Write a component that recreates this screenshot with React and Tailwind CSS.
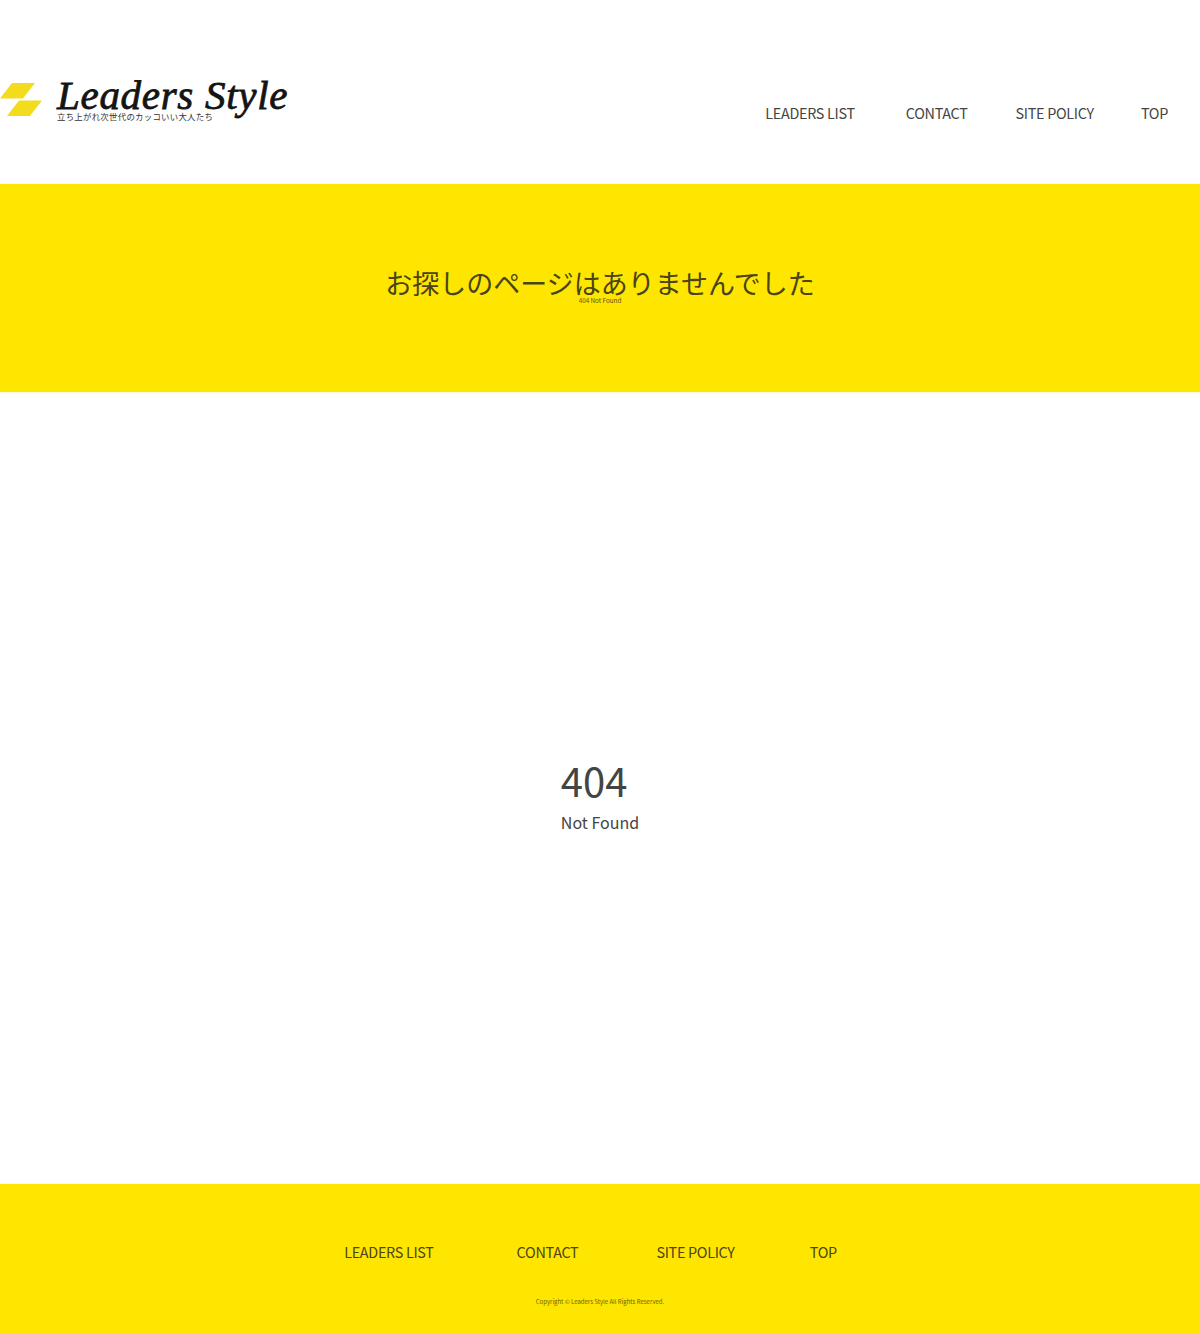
const jp = '"Noto Sans CJK JP", "Noto Sans", sans-serif'

function LogoMark() {
  return (
    <svg width="43" height="36" viewBox="0 0 43 36" className="shrink-0">
      <polygon points="12,1 35,1 23,16.5 0,16.5" fill="#f3dc1e" />
      <polygon points="19,18.5 42,18.5 30,34 7,34" fill="#f3dc1e" />
    </svg>
  )
}

function Logo() {
  return (
    <div className="flex items-start">
      <div className="mt-[6px]">
        <LogoMark />
      </div>
      <div className="ml-[14px] flex flex-col">
        <span className="font-['Liberation_Serif'] text-[41px] leading-[38px] italic font-normal text-[#141414] tracking-[0.7px] [-webkit-text-stroke:0.8px_#141414] whitespace-nowrap">
          Leaders Style
        </span>
        <span className="mt-[-4px] text-[8.4px] leading-[12px] tracking-[0.3px] text-[#333] whitespace-nowrap">
          立ち上がれ次世代のカッコいい大人たち
        </span>
      </div>
    </div>
  )
}

export default function App() {
  return (
    <div className="min-h-[1334px] flex flex-col bg-white text-[#444]" style={{ fontFamily: jp }}>
      <header className="h-[184px] flex items-start justify-between">
        <div className="mt-[76px]">
          <Logo />
        </div>
        <nav className="mt-[103px] flex text-[14.4px] leading-[20px] tracking-[-0.3px] pr-[32px]">
          <a>LEADERS LIST</a>
          <a className="ml-[51px]">CONTACT</a>
          <a className="ml-[48px]">SITE POLICY</a>
          <a className="ml-[47px]">TOP</a>
        </nav>
      </header>

      <section className="h-[208px] bg-[#ffe600] shadow-[0_0_1px_#ffe600] flex flex-col items-center pt-[81px]">
        <h1 className="text-[27px] leading-[36px] font-normal text-[#4a4416]">お探しのページはありませんでした</h1>
        <p className="text-[6.3px] leading-[8px] mt-[-2px] text-[#5c5412] relative top-[-2px]">404 Not Found</p>
      </section>

      <main className="h-[792px] flex justify-center pt-[360px]">
        <div>
          <div className="text-[40px] leading-[56px]">404</div>
          <div className="mt-[1px] text-[16px] leading-[26px]">Not Found</div>
        </div>
      </main>

      <footer className="h-[150px] bg-[#ffe600] shadow-[0_0_1px_#ffe600] flex flex-col items-center pt-[58px]">
        <nav className="flex text-[14.4px] leading-[20px] tracking-[-0.3px] text-[#4a4416] ml-[-19px]">
          <a>LEADERS LIST</a>
          <a className="ml-[83px]">CONTACT</a>
          <a className="ml-[78px]">SITE POLICY</a>
          <a className="ml-[75px]">TOP</a>
        </nav>
        <p className="mt-[36px] text-[6px] leading-[8px] text-[#6b6210]">Copyright © Leaders Style All Rights Reserved.</p>
      </footer>
    </div>
  )
}
